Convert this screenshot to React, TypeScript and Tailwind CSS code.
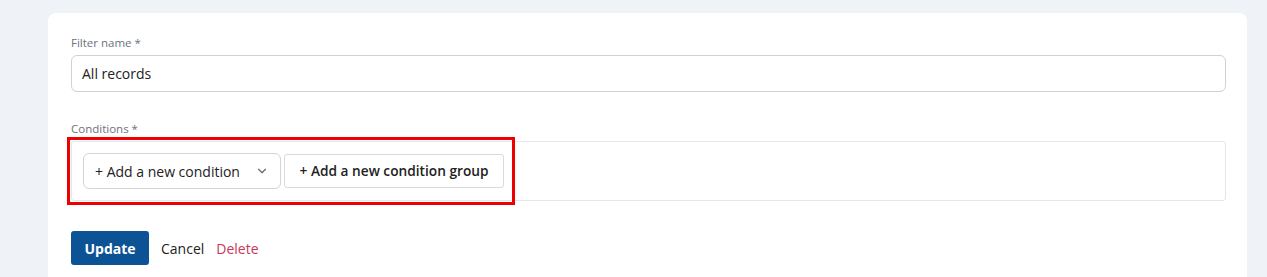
import React from "react";

export default function App() {
  const font = { fontFamily: '"Open Sans", "Noto Sans", sans-serif' };
  return (
    <div className="w-[1267px] h-[277px] overflow-hidden bg-[#eff2f7] pt-[13px] pl-[48px] pr-[20px]" style={font}>
      <div className="bg-white rounded-t-[8px] h-[300px] pt-[23px] pl-[23px] pr-[21px]">
        <div className="text-[11.5px] text-[#6b7280] leading-[14px] mb-[5px]">Filter name *</div>
        <div className="h-[37px] rounded-[6px] border border-[#d1d1d1] flex items-center px-[10px] text-[14px] text-[#222]">
          All records
        </div>
        <div className="text-[11.5px] text-[#6b7280] leading-[14px] mt-[30px] mb-[5px]">Conditions *</div>
        <div className="relative h-[60px] rounded-[3px] border border-[#e3e6ee] flex items-center pl-[11px] gap-[3px]">
          <div className="absolute left-[-5px] top-[-5px] w-[448px] h-[68px] border-[3px] border-[#ee0000] pointer-events-none" />
          <div className="h-[36px] w-[198px] rounded-[6px] border border-[#d4d4d8] flex items-center justify-between pl-[11px] pr-[11px] text-[14px] text-[#222]">
            <span>+ Add a new condition</span>
            <svg width="14" height="14" viewBox="0 0 24 24" fill="none" stroke="#666" strokeWidth="2" strokeLinecap="round" strokeLinejoin="round">
              <path d="M6 9l6 6 6-6" />
            </svg>
          </div>
          <div className="h-[34px] w-[220px] rounded-[3px] border border-[#d6dae3] flex items-center justify-center text-[13.7px] font-semibold text-[#222]">
            + Add a new condition group
          </div>
        </div>
        <div className="mt-[30px] flex items-center">
          <div className="h-[34px] w-[78px] rounded-[3px] bg-[#0b5394] text-white text-[14px] font-bold flex items-center justify-center">
            Update
          </div>
          <span className="ml-[12px] text-[14px] text-[#222]">Cancel</span>
          <span className="ml-[12px] text-[14px] text-[#c8375a]">Delete</span>
        </div>
      </div>
    </div>
  );
}
